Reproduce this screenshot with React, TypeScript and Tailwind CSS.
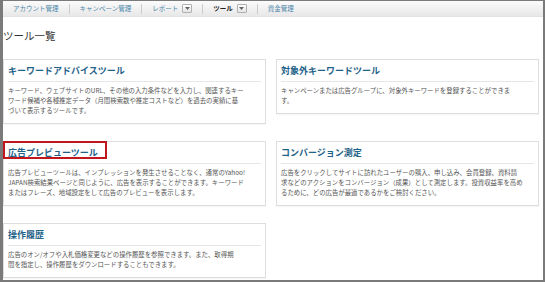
const tools = [
  {
    title: "キーワードアドバイスツール",
    lines: [
      "キーワード、ウェブサイトのURL、その他の入力条件などを入力し、関連するキー",
      "ワード候補や各種推定データ（月間検索数や推定コストなど）を過去の実績に基",
      "づいて表示するツールです。",
    ],
  },
  {
    title: "対象外キーワードツール",
    lines: ["キャンペーンまたは広告グループに、対象外キーワードを登録することができま", "す。"],
  },
  {
    title: "広告プレビューツール",
    highlight: true,
    lines: [
      "広告プレビューツールは、インプレッションを発生させることなく、通常のYahoo!",
      "JAPAN検索結果ページと同じように、広告を表示することができます。キーワード",
      "またはフレーズ、地域設定をして広告のプレビューを表示します。",
    ],
  },
  {
    title: "コンバージョン測定",
    lines: [
      "広告をクリックしてサイトに訪れたユーザーの購入、申し込み、会員登録、資料請",
      "求などのアクションをコンバージョン（成果）として測定します。投資収益率を高め",
      "るために、どの広告が最適であるかをご検討ください。",
    ],
  },
  {
    title: "操作履歴",
    lines: [
      "広告のオン/オフや入札価格変更などの操作履歴を参照できます。また、取得期",
      "間を指定し、操作履歴をダウンロードすることもできます。",
    ],
  },
];

function Sep() {
  return <div className="w-px h-[10px] bg-[#cccccc] mx-[10px]" />;
}

function DropBtn() {
  return (
    <div className="ml-[4px] w-[10px] h-[9px] border border-[#b0b0b0] rounded-[1px] bg-gradient-to-b from-white to-[#e4e4e4] flex items-center justify-center">
      <svg width="5" height="3" viewBox="0 0 5 3">
        <polygon points="0,0 5,0 2.5,3" fill="#666" />
      </svg>
    </div>
  );
}

function ToolCard({ title, lines, highlight }: { title: string; lines: string[]; highlight?: boolean }) {
  return (
    <div className="relative border border-[#dedede] bg-white px-[4px] pt-[5px] pb-[7px] shadow-[0_1px_1px_rgba(0,0,0,0.04)]">
      {highlight && (
        <div className="absolute -left-[1px] -top-[1px] w-[104px] h-[18px] border-2 border-[#c0161c]" />
      )}
      <div className="text-[9px] leading-[12px] font-bold text-[#1f6389] pb-[4px] border-b border-[#e6e6e6]">
        {title}
      </div>
      <div className="mt-[4px] text-[6.4px] leading-[10px] text-[#555555] whitespace-nowrap">
        {lines.map((l) => (
          <div key={l}>{l}</div>
        ))}
      </div>
    </div>
  );
}

export default function App() {
  return (
    <div className="w-[545px] h-[282px] overflow-hidden bg-white border-l-[3px] border-t border-r-2 border-b-2 border-[#7a7a7a] font-['Noto_Sans_CJK_JP','Noto_Sans',sans-serif]">
      <nav className="h-[16px] flex items-center pl-[10px] bg-gradient-to-b from-[#fbfbfb] to-[#e8e8e8] border-b border-[#e2e2e2] text-[6.5px] text-[#4d87aa]">
        <span>アカウント管理</span>
        <Sep />
        <span>キャンペーン管理</span>
        <Sep />
        <span>レポート</span>
        <DropBtn />
        <Sep />
        <span className="font-bold text-[#222]">ツール</span>
        <DropBtn />
        <Sep />
        <span>資金管理</span>
      </nav>

      <h1 className="mt-[12px] text-[10.5px] leading-[14px] text-[#333]">ツール一覧</h1>

      <div className="mt-[16px] pr-[4px] grid grid-cols-2 gap-x-[10px] gap-y-[17px] items-start">
        {tools.map((t) => (
          <ToolCard key={t.title} title={t.title} lines={t.lines} highlight={t.highlight} />
        ))}
      </div>
    </div>
  );
}
